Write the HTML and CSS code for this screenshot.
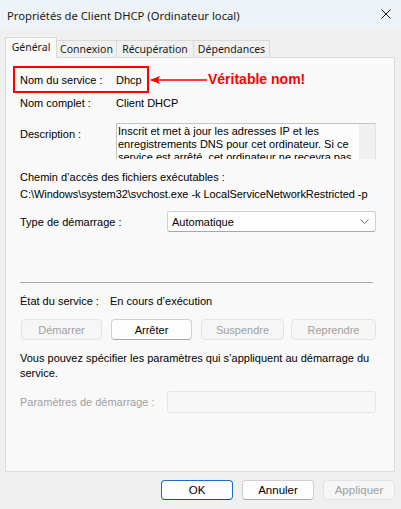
FILE: index.html
```html
<!DOCTYPE html>
<html lang="fr">
<head>
<meta charset="utf-8">
<title>Propriétés de Client DHCP</title>
<link rel="stylesheet" href="styles.css">
</head>
<body>
<div class="window">
  <div class="titlebar">
    <span class="title">Propriétés de Client DHCP (Ordinateur local)</span>
    <svg class="close" width="10" height="10" viewBox="0 0 10 10"><path d="M0.5 0.5 L9.5 9.5 M9.5 0.5 L0.5 9.5" stroke="#1a1a1a" stroke-width="1"/></svg>
  </div>
  <div class="tabs">
    <div class="tab active">Général</div>
    <div class="tab t2">Connexion</div>
    <div class="tab t3">Récupération</div>
    <div class="tab t4">Dépendances</div>
  </div>
  <div class="panel">
    <div class="annot">
      <div class="redbox">
        <span class="lbl">Nom du service :</span>
        <span>Dhcp</span>
      </div>
      <svg class="arrow" width="58" height="12" viewBox="0 0 58 12"><path d="M2 6 L58 6" stroke="#ff0000" stroke-width="1.6"/><path d="M1 6 L11 2 L9 6 L11 10 Z" fill="#ff0000"/></svg>
      <span class="annot-text">Véritable nom!</span>
    </div>
    <div class="row r-complet">
      <span class="lbl">Nom complet :</span>
      <span>Client DHCP</span>
    </div>
    <div class="row r-desc">
      <span class="lbl desc-lbl">Description :</span>
      <div class="textbox">
        <div class="tb-text">Inscrit et met à jour les adresses IP et les enregistrements DNS pour cet ordinateur. Si ce service est arrêté, cet ordinateur ne recevra pas</div>
        <div class="tb-scroll"></div>
      </div>
    </div>
    <div class="path-lbl">Chemin d’accès des fichiers exécutables :</div>
    <div class="path">C:\Windows\system32\svchost.exe -k LocalServiceNetworkRestricted -p</div>
    <div class="row r-type">
      <span class="lbl2">Type de démarrage :</span>
      <div class="select">
        <span>Automatique</span>
        <svg width="9" height="5" viewBox="0 0 9 5"><path d="M0.5 0.5 L4.5 4.5 L8.5 0.5" fill="none" stroke="#6e6e6e" stroke-width="1"/></svg>
      </div>
    </div>
    <div class="sep"></div>
    <div class="row r-etat">
      <span class="lbl-etat">État du service :</span>
      <span>En cours d’exécution</span>
    </div>
    <div class="btns">
      <div class="btn disabled b1">Démarrer</div>
      <div class="btn b2">Arrêter</div>
      <div class="btn disabled b3">Suspendre</div>
      <div class="btn disabled b4">Reprendre</div>
    </div>
    <div class="info">Vous pouvez spécifier les paramètres qui s’appliquent au démarrage du service.</div>
    <div class="row r-param">
      <span class="lbl2 grey">Paramètres de démarrage :</span>
      <div class="input"></div>
    </div>
  </div>
  <div class="footer">
    <div class="fbtn ok">OK</div>
    <div class="fbtn">Annuler</div>
    <div class="fbtn disabled">Appliquer</div>
  </div>
</div>
</body>
</html>
```

FILE: styles.css
```css
* { box-sizing: border-box; }
html, body { margin: 0; padding: 0; }
body {
  width: 401px;
  height: 509px;
  overflow: hidden;
  background: #f0f0f0;
  font-family: "Liberation Sans", Arial, sans-serif;
  font-size: 11px;
  color: #000;
}
.window { width: 401px; height: 509px; background: #f0f0f0; }
.titlebar {
  height: 30px;
  background: #eef3f8;
  display: flex;
  align-items: center;
  justify-content: space-between;
  padding: 0 10px 0 7px;
  font-family: "Noto Sans", "Open Sans", sans-serif;
  font-size: 11.25px;
  color: #1a1a1a;
}
.close { margin-top: -2px; }
.tabs {
  display: flex;
  align-items: flex-end;
  margin: 7px 0 0 5px;
  height: 20px;
  font-family: "Noto Sans", "Open Sans", sans-serif;
  font-size: 10.5px;
  position: relative;
  z-index: 2;
}
.tab {
  height: 17px;
  border: 1px solid #d9d9d9;
  border-bottom: none;
  border-left: none;
  display: flex;
  align-items: center;
  justify-content: center;
  background: #f0f0f0;
  color: #1a1a1a;
  white-space: nowrap;
}
.t2 { width: 60px; }
.t3 { width: 77px; }
.t4 { width: 76px; }
.tab.active {
  height: 21px;
  width: 52px;
  margin-bottom: -1px;
  background: #f9f9f9;
  border-left: 1px solid #d9d9d9;
  padding: 0 0 3px 0;
}
.panel {
  margin: 0 6px 0 5px;
  height: 415px;
  border: 1px solid #dcdcdc;
  background: #f9f9f9;
  padding: 0 0 0 14px;
}
.annot {
  display: flex;
  align-items: center;
  margin: 8px 0 0 -7px;
  height: 27px;
}
.redbox {
  width: 136px;
  height: 27px;
  border: 2px solid #ff0000;
  display: flex;
  align-items: center;
  padding-left: 5px;
}
.lbl { width: 96px; flex: none; }
.annot-text {
  color: #ff0000;
  font-weight: bold;
  font-size: 14px;
  margin-left: 1px;
  margin-top: -1px;
}
.row { display: flex; align-items: center; }
.r-complet { margin-top: 3px; height: 14px; }
.r-desc { margin-top: 13px; align-items: flex-start; }
.desc-lbl { margin-top: 5px; }
.textbox {
  width: 260px;
  height: 36px;
  border: 1px solid #c4c4c4;
  border-bottom: none;
  border-right-color: #e3e3e3;
  background: #fcfcfc;
  display: flex;
  overflow: hidden;
}
.tb-text {
  flex: 1;
  padding: 1px 0 0 1px;
  line-height: 13px;
  height: 35px;
  overflow: hidden;
}
.tb-scroll { width: 16px; background: #f0f0f0; flex: none; }
.path-lbl { margin-top: 11px; line-height: 14px; }
.path { margin-top: 3px; line-height: 14px; letter-spacing: -0.05px; }
.r-type { margin-top: 10px; }
.lbl2 { width: 147px; flex: none; }
.select {
  width: 209px;
  height: 21px;
  border: 1px solid #d0d0d0;
  border-bottom-color: #a8a8a8;
  border-radius: 3px;
  background: #fefefe;
  display: flex;
  align-items: center;
  justify-content: space-between;
  padding: 0 6px 0 4px;
}
.sep {
  margin: 50px 0 0 0;
  width: 353px;
  height: 1px;
  background: #a7a7a7;
}
.r-etat { margin-top: 11px; height: 14px; }
.lbl-etat { width: 90px; flex: none; }
.btns { display: flex; margin-top: 11px; margin-left: 1px; }
.btn {
  height: 21px;
  border: 1px solid #cfcfcf;
  border-bottom-color: #a9a9a9;
  border-radius: 4px;
  background: #fdfdfd;
  display: flex;
  align-items: center;
  justify-content: center;
}
.btn.disabled {
  border-color: #e3e3e3;
  background: #f6f6f6;
  color: #a0a0a0;
}
.b1 { width: 81px; }
.b2 { width: 81px; margin-left: 9px; }
.b3 { width: 83px; margin-left: 9px; }
.b4 { width: 85px; margin-left: 7px; }
.info { margin-top: 11px; line-height: 15px; width: 360px; }
.r-param { margin-top: 10px; }
.grey { color: #a0a0a0; }
.input {
  width: 209px;
  height: 22px;
  border: 1px solid #e6e6e6;
  border-radius: 3px;
  background: #f7f7f7;
}
.footer {
  display: flex;
  margin: 8px 0 0 161px;
  gap: 9px;
}
.fbtn {
  width: 72px;
  height: 20px;
  border: 1px solid #cfcfcf;
  border-bottom-color: #a9a9a9;
  border-radius: 4px;
  background: #fdfdfd;
  display: flex;
  align-items: center;
  justify-content: center;
  font-size: 11.5px;
}
.fbtn.ok { border-color: #1a6fc4; border-bottom-color: #0a4f9a; }
.fbtn.disabled { border-color: #e3e3e3; background: #f6f6f6; color: #a0a0a0; }
```
